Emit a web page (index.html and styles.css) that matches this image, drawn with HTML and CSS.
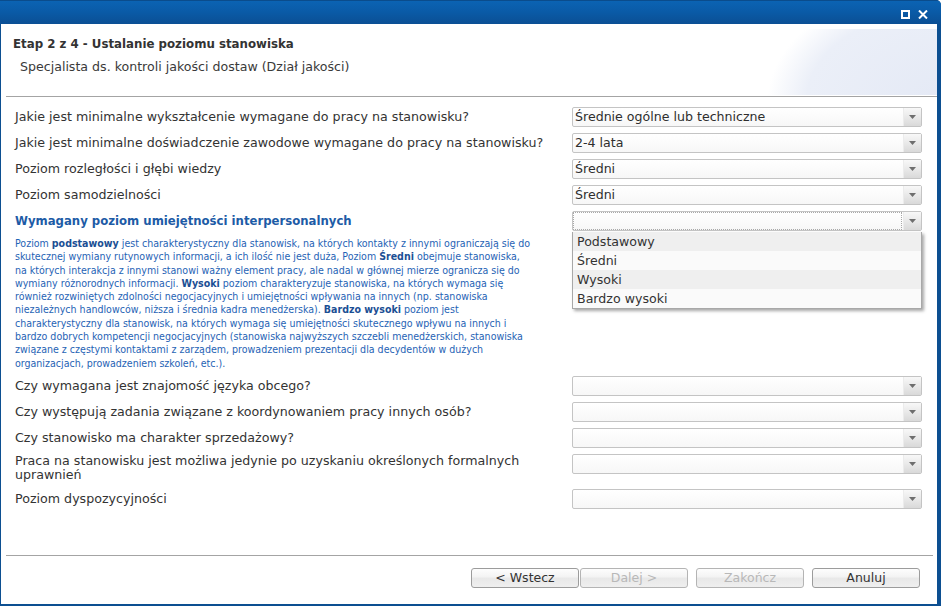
FILE: index.html
```html
<!DOCTYPE html>
<html lang="pl">
<head>
<meta charset="utf-8">
<title>Etap 2 z 4</title>
<link rel="stylesheet" href="styles.css">
</head>
<body>
<div class="window">
  <div class="titlebar">
    <div class="tb-icons">
      <svg class="tb-icon" width="9" height="9" viewBox="0 0 9 9"><rect x="1" y="1" width="7" height="7" fill="none" stroke="#fff" stroke-width="2"/></svg>
      <svg class="tb-icon" width="10" height="9" viewBox="0 0 10 9"><path d="M1 0.5 L9 8.5 M9 0.5 L1 8.5" stroke="#fff" stroke-width="2" fill="none"/></svg>
    </div>
  </div>
  <div class="client">
    <div class="header">
      <div class="title">Etap 2 z 4 - Ustalanie poziomu stanowiska</div>
      <div class="subtitle">Specjalista ds. kontroli jakości dostaw (Dział jakości)</div>
    </div>
    <div class="sep"></div>
    <div class="form">
      <div class="label">Jakie jest minimalne wykształcenie wymagane do pracy na stanowisku?</div>
      <div class="combo"><span class="combo-text">Średnie ogólne lub techniczne</span><span class="combo-btn"><svg width="7" height="4" viewBox="0 0 7 4"><path d="M0 0H7L3.5 4Z" fill="#6e6e6e"/></svg></span></div>

      <div class="label">Jakie jest minimalne doświadczenie zawodowe wymagane do pracy na stanowisku?</div>
      <div class="combo"><span class="combo-text">2-4 lata</span><span class="combo-btn"><svg width="7" height="4" viewBox="0 0 7 4"><path d="M0 0H7L3.5 4Z" fill="#6e6e6e"/></svg></span></div>

      <div class="label">Poziom rozległości i głębi wiedzy</div>
      <div class="combo"><span class="combo-text">Średni</span><span class="combo-btn"><svg width="7" height="4" viewBox="0 0 7 4"><path d="M0 0H7L3.5 4Z" fill="#6e6e6e"/></svg></span></div>

      <div class="label">Poziom samodzielności</div>
      <div class="combo"><span class="combo-text">Średni</span><span class="combo-btn"><svg width="7" height="4" viewBox="0 0 7 4"><path d="M0 0H7L3.5 4Z" fill="#6e6e6e"/></svg></span></div>

      <div class="label label-strong">Wymagany poziom umiejętności interpersonalnych</div>
      <div class="combo-wrap">
        <div class="combo combo-focus"><span class="combo-text"></span><span class="combo-btn"><svg width="7" height="4" viewBox="0 0 7 4"><path d="M0 0H7L3.5 4Z" fill="#6e6e6e"/></svg></span></div>
        <ul class="combo-list">
          <li class="item item-alt">Podstawowy</li>
          <li class="item">Średni</li>
          <li class="item item-alt">Wysoki</li>
          <li class="item">Bardzo wysoki</li>
        </ul>
      </div>

      <p class="help">Poziom <b>podstawowy</b> jest charakterystyczny dla stanowisk, na których kontakty z innymi ograniczają się do<br>skutecznej wymiany rutynowych informacji, a ich ilość nie jest duża, Poziom <b>Średni</b> obejmuje stanowiska,<br>na których interakcja z innymi stanowi ważny element pracy, ale nadal w głównej mierze ogranicza się do<br>wymiany różnorodnych informacji. <b>Wysoki</b> poziom charakteryzuje stanowiska, na których wymaga się<br>również rozwiniętych zdolności negocjacyjnych i umiejętności wpływania na innych (np. stanowiska<br>niezależnych handlowców, niższa i średnia kadra menedżerska). <b>Bardzo wysoki</b> poziom jest<br>charakterystyczny dla stanowisk, na których wymaga się umiejętności skutecznego wpływu na innych i<br>bardzo dobrych kompetencji negocjacyjnych (stanowiska najwyższych szczebli menedżerskich, stanowiska<br>związane z częstymi kontaktami z zarządem, prowadzeniem prezentacji dla decydentów w dużych<br>organizacjach, prowadzeniem szkoleń, etc.).</p>

      <div class="label">Czy wymagana jest znajomość języka obcego?</div>
      <div class="combo"><span class="combo-text"></span><span class="combo-btn"><svg width="7" height="4" viewBox="0 0 7 4"><path d="M0 0H7L3.5 4Z" fill="#6e6e6e"/></svg></span></div>

      <div class="label">Czy występują zadania związane z koordynowaniem pracy innych osób?</div>
      <div class="combo"><span class="combo-text"></span><span class="combo-btn"><svg width="7" height="4" viewBox="0 0 7 4"><path d="M0 0H7L3.5 4Z" fill="#6e6e6e"/></svg></span></div>

      <div class="label">Czy stanowisko ma charakter sprzedażowy?</div>
      <div class="combo"><span class="combo-text"></span><span class="combo-btn"><svg width="7" height="4" viewBox="0 0 7 4"><path d="M0 0H7L3.5 4Z" fill="#6e6e6e"/></svg></span></div>

      <div class="label label-multi">Praca na stanowisku jest możliwa jedynie po uzyskaniu określonych formalnych<br>uprawnień</div>
      <div class="combo"><span class="combo-text"></span><span class="combo-btn"><svg width="7" height="4" viewBox="0 0 7 4"><path d="M0 0H7L3.5 4Z" fill="#6e6e6e"/></svg></span></div>

      <div class="label">Poziom dyspozycyjności</div>
      <div class="combo"><span class="combo-text"></span><span class="combo-btn"><svg width="7" height="4" viewBox="0 0 7 4"><path d="M0 0H7L3.5 4Z" fill="#6e6e6e"/></svg></span></div>
    </div>
    <div class="sep sep-bottom"></div>
    <div class="footer">
      <button class="btn">&lt; Wstecz</button>
      <button class="btn btn-disabled btn-next">Dalej &gt;</button>
      <button class="btn btn-disabled">Zakończ</button>
      <button class="btn">Anuluj</button>
    </div>
  </div>
</div>
</body>
</html>
```

FILE: styles.css
```css
* { box-sizing: border-box; }
html, body { margin: 0; padding: 0; }
body {
  width: 941px;
  height: 606px;
  overflow: hidden;
  background: #fff;
  font-family: "DejaVu Sans", Verdana, sans-serif;
}
.window {
  width: 941px;
  height: 606px;
  display: flex;
  flex-direction: column;
  background: #0c4f91;
  border-top-right-radius: 5px;
  overflow: hidden;
}
.titlebar {
  height: 24px;
  flex: none;
  background: linear-gradient(#0b63b3, #0a5aa6 50%, #0b4f94);
  border-top: 1px solid #0a4c8c;
  display: flex;
  justify-content: flex-end;
  align-items: center;
}
.tb-icons {
  display: flex;
  gap: 8px;
  align-items: center;
  margin-right: 13px;
  margin-top: 3px;
}
.tb-icon { display: block; }
.client {
  flex: 1;
  background: #fff;
  margin: 0 4px 2px 1px;
  display: flex;
  flex-direction: column;
}
.header {
  height: 72px;
  padding: 12px 0 0 12px;
  background:
    radial-gradient(ellipse 260px 170px at 105% 110%, #e4e9f5 0%, #ebeff8 55%, rgba(255,255,255,0) 70%) no-repeat right 0 top 5px / 250px 66px;
}
.title {
  font-weight: bold;
  font-size: 11.8px;
  line-height: 16px;
  color: #333;
}
.subtitle {
  margin-top: 7px;
  padding-left: 7px;
  font-size: 12.6px;
  line-height: 16px;
  color: #3a3a3a;
}
.sep {
  height: 1px;
  flex: none;
  background: #a4a4a4;
  margin-left: 5px;
}
.sep-bottom { margin-right: 4px; }
.form {
  flex: 1;
  display: grid;
  grid-template-columns: 557px 350px;
  align-content: start;
  align-items: start;
  row-gap: 6px;
  padding: 10px 0 0 14px;
}
.label {
  font-size: 12.65px;
  line-height: 14px;
  padding-top: 3px;
  color: #333;
  white-space: nowrap;
}
.label-strong {
  font-weight: bold;
  font-size: 11.7px;
  color: #1d5ba6;
}
.label-multi {
  padding-top: 0;
  line-height: 14.5px;
}
.combo {
  height: 20px;
  display: flex;
  border: 1px solid #c4c4c4;
  border-radius: 2px;
  background: linear-gradient(#fff, #f7f7f7);
}
.combo-text {
  flex: 1;
  padding-left: 2px;
  font-size: 12.6px;
  line-height: 18px;
  color: #2e2e2e;
  white-space: nowrap;
  overflow: hidden;
}
.combo-focus .combo-text {
  border: 1px dotted #a9a9a9;
  margin: 0 1px 0 0;
}
.combo-btn {
  width: 18px;
  flex: none;
  border-left: 1px solid #ececec;
  background: linear-gradient(#f8f8f8, #e9e9e9 50%, #d9d9d9);
  display: flex;
  align-items: center;
  justify-content: center;
}
.combo-btn svg { display: block; }
.combo-wrap { position: relative; }
.combo-list {
  position: absolute;
  top: 21px;
  left: 0;
  width: 350px;
  margin: 0;
  padding: 0;
  list-style: none;
  border: 1px solid #a8a8a8;
  border-top: none;
  background: #fafafa;
  box-shadow: 2px 2px 3px rgba(0,0,0,0.35);
  z-index: 2;
}
.item {
  height: 19px;
  padding-left: 4px;
  font-size: 12.6px;
  line-height: 19px;
  color: #333;
}
.item-alt { background: #efefef; }
.help {
  grid-column: 1 / -1;
  margin: 0;
  font-family: "DejaVu Sans Condensed", "DejaVu Sans", sans-serif;
  font-size: 10.55px;
  line-height: 13.3px;
  color: #1f63b5;
  white-space: nowrap;
}
.help b { color: #1b4f94; }
.footer {
  flex: none;
  height: 48px;
  display: flex;
  padding: 12px 0 0 470px;
}
.btn {
  width: 108px;
  height: 20px;
  margin: 0 8px 0 0;
  padding: 0;
  border: 1px solid #9c9c9c;
  border-radius: 3px;
  background: linear-gradient(#fdfdfd, #f3f3f3 45%, #e8e8e8 50%, #efefef);
  font-family: "DejaVu Sans", Verdana, sans-serif;
  font-weight: normal;
  font-size: 12.5px;
  line-height: 18px;
  color: #333;
}
.btn:first-child { margin-right: 1px; }
.btn-disabled {
  color: #b8b8b8;
  border-color: #b4b4b4;
}
```
